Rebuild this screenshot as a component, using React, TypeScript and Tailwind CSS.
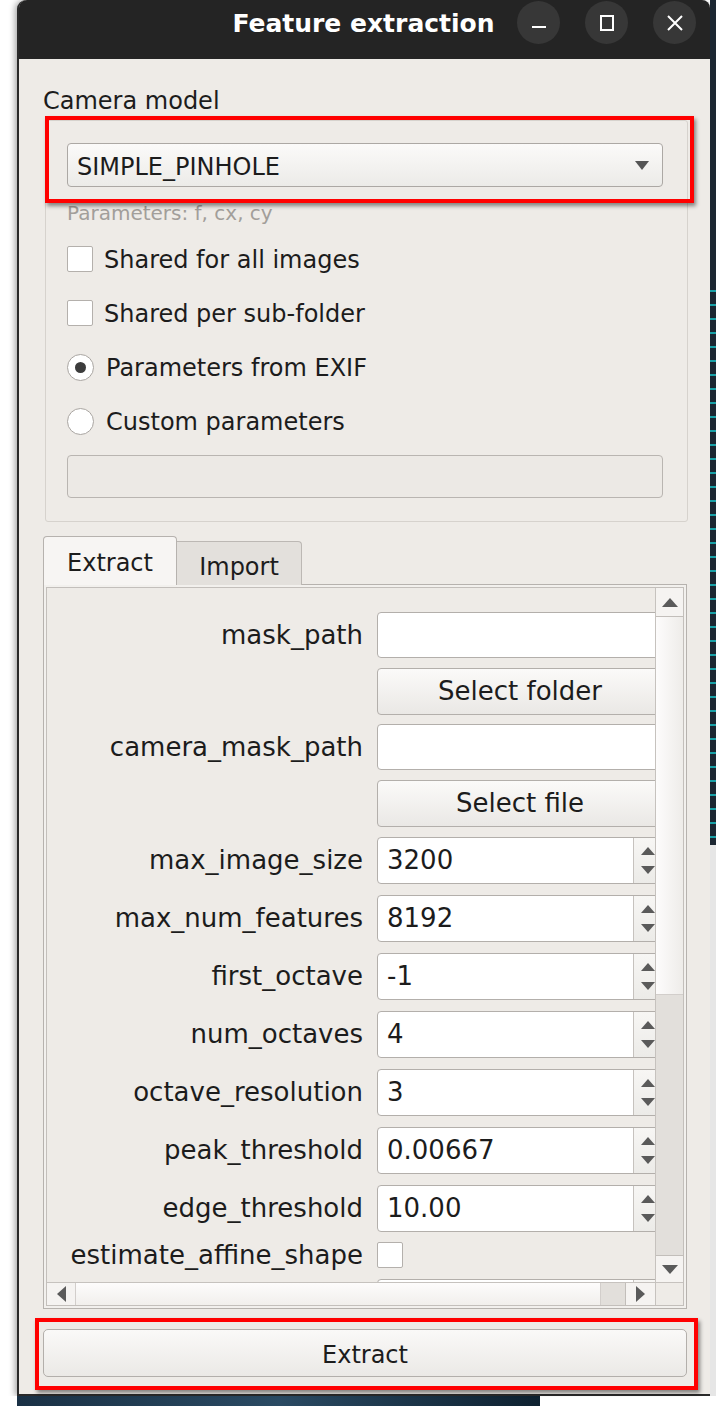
import React from "react";

type Dir = "up" | "down" | "left" | "right";

function Tri({ dir, w = 14, h = 8, color = "#5a5a5a" }: { dir: Dir; w?: number; h?: number; color?: string }) {
  const vertical = dir === "up" || dir === "down";
  const W = vertical ? w : h;
  const H = vertical ? h : w;
  let pts = "";
  if (dir === "up") pts = `0,${H} ${W / 2},0 ${W},${H}`;
  if (dir === "down") pts = `0,0 ${W},0 ${W / 2},${H}`;
  if (dir === "left") pts = `${W},0 ${W},${H} 0,${H / 2}`;
  if (dir === "right") pts = `0,0 ${W},${H / 2} 0,${H}`;
  return (
    <svg width={W} height={H} viewBox={`0 0 ${W} ${H}`} className="block shrink-0">
      <polygon points={pts} fill={color} />
    </svg>
  );
}

function TitleBar() {
  return (
    <div className="relative h-[59px] shrink-0 bg-[#242424] rounded-t-[8px] flex justify-center">
      <div className="h-[48px] leading-[48px] text-white font-bold text-[25px] font-['DejaVu_Sans',sans-serif] pr-[2px]">
        Feature extraction
      </div>
      <div className="absolute right-[14px] top-[1px] flex gap-[25px]">
        <div className="w-[43px] h-[43px] rounded-full bg-[#373737] flex items-center justify-center">
          <svg width="16" height="16" viewBox="0 0 16 16">
            <rect x="1" y="11" width="14" height="2" fill="#fff" />
          </svg>
        </div>
        <div className="w-[43px] h-[43px] rounded-full bg-[#373737] flex items-center justify-center">
          <svg width="16" height="18" viewBox="0 0 16 18">
            <rect x="2" y="2" width="12" height="14" fill="none" stroke="#fff" strokeWidth="2" />
          </svg>
        </div>
        <div className="w-[43px] h-[43px] rounded-full bg-[#373737] flex items-center justify-center">
          <svg width="18" height="18" viewBox="0 0 18 18">
            <path d="M2 2 L16 16 M16 2 L2 16" stroke="#fff" strokeWidth="2" />
          </svg>
        </div>
      </div>
    </div>
  );
}

function CheckRow({ label, first }: { label: string; first?: boolean }) {
  return (
    <div className={`${first ? "mt-[20px]" : "mt-[24px]"} h-[30px] flex items-center`}>
      <div className="w-[26px] h-[26px] bg-white border border-[#b4b0ac] rounded-[2px] shrink-0" />
      <span className="ml-[11px] text-[24px] leading-[30px] pt-[2px]">{label}</span>
    </div>
  );
}

function RadioRow({ label, checked }: { label: string; checked?: boolean }) {
  return (
    <div className="mt-[24px] h-[30px] flex items-center">
      <div className="w-[27px] h-[27px] bg-white border border-[#a9a5a1] rounded-full shrink-0 flex items-center justify-center">
        {checked && <div className="w-[11px] h-[11px] rounded-full bg-[#3c3c3c]" />}
      </div>
      <span className="ml-[12px] text-[24px] leading-[30px] pt-[2px]">{label}</span>
    </div>
  );
}

function Label({ text }: { text: string }) {
  return (
    <div className="w-[330px] shrink-0 pr-[14px] text-right text-[26px] whitespace-nowrap">{text}</div>
  );
}

function InputRow({ label }: { label: string }) {
  return (
    <div className="h-[46px] flex items-center">
      <Label text={label} />
      <div className="w-[286px] h-[46px] shrink-0 bg-white border border-[#b3afab] rounded-[4px]" />
    </div>
  );
}

function ButtonRow({ text }: { text: string }) {
  return (
    <div className="h-[46px] flex items-center">
      <Label text="" />
      <div className="w-[286px] h-[47px] shrink-0 border border-[#b3afab] rounded-[4px] bg-gradient-to-b from-[#fbfaf9] to-[#eae8e5] flex items-center justify-center text-[26px] pt-[1px]">
        {text}
      </div>
    </div>
  );
}

function SpinRow({ label, value }: { label: string; value: string }) {
  return (
    <div className="h-[48px] flex items-center">
      <Label text={label} />
      <div className="w-[286px] h-[47px] shrink-0 bg-white border border-[#b3afab] rounded-[4px] flex overflow-hidden">
        <div className="flex-1 pl-[9px] pt-[1px] flex items-center text-[26px]">{value}</div>
        <div className="w-[29px] border-l border-[#c6c2be] bg-gradient-to-b from-[#f7f6f4] to-[#ecebe8] flex flex-col items-center justify-center gap-[11px] pr-[1px]">
          <Tri dir="up" w={14} h={8} />
          <Tri dir="down" w={14} h={8} />
        </div>
      </div>
    </div>
  );
}

function CheckFieldRow({ label }: { label: string }) {
  return (
    <div className="h-[26px] flex items-center">
      <Label text={label} />
      <div className="w-[26px] h-[26px] bg-white border border-[#b4b0ac] rounded-[2px] shrink-0" />
    </div>
  );
}

function RightStrip() {
  const dashes = Array.from({ length: 40 });
  return (
    <div className="w-[6px] shrink-0 flex flex-col">
      <div className="h-[845px] bg-[#1c2732] flex flex-col gap-[12px] pt-[290px] overflow-hidden">
        {dashes.map((_, i) => (
          <div key={i} className="h-[2px] w-[6px] bg-[#19a0a6] shrink-0" />
        ))}
      </div>
      <div className="flex-1 bg-[#e6e6e6]" />
    </div>
  );
}

export default function App() {
  return (
    <div className="relative w-[716px] h-[1406px] bg-white overflow-hidden font-['DejaVu_Sans',sans-serif] text-[#1c1c1c]">
      <div className="flex h-[1396px]">
        <div className="w-[17px] shrink-0 bg-white" />
        <div className="w-[693px] shrink-0 flex flex-col bg-[#eeebe7] border-l-2 border-b-2 border-[#2a2a2a] rounded-t-[9px] shadow-[-2px_0_6px_rgba(0,0,0,0.35)]">
          <TitleBar />
          <div className="flex flex-col pl-[24px] pr-[23px]">
            <div className="mt-[27px] h-[28px] leading-[28px] text-[24px] pt-[1px]">Camera model</div>

            <div className="mt-[6px] ml-[2px] w-[643px] border border-[#d6d2cd] rounded-[3px] pl-[21px] pr-[24px] pt-[22px] pb-[23px] flex flex-col">
              <div className="h-[44px] border border-[#aca8a4] rounded-[4px] bg-gradient-to-b from-[#fbfaf9] to-[#ecebe8] flex items-center pl-[9px] pr-[13px]">
                <span className="flex-1 text-[24px] pt-[3px]">SIMPLE_PINHOLE</span>
                <Tri dir="down" w={14} h={9} color="#555" />
              </div>
              <div className="mt-[15px] h-[22px] leading-[22px] text-[20px] text-[#a29e9a]">Parameters: f, cx, cy</div>
              <CheckRow label="Shared for all images" first />
              <CheckRow label="Shared per sub-folder" />
              <RadioRow label="Parameters from EXIF" checked />
              <RadioRow label="Custom parameters" />
              <div className="mt-[19px] h-[43px] border border-[#b9b5b1] rounded-[4px] bg-[#ece9e5]" />
            </div>

            <div className="mt-[14px] h-[49px] flex items-end relative z-10">
              <div className="w-[134px] h-[49px] bg-[#f7f5f3] border border-b-0 border-[#b6b2ae] rounded-t-[4px] flex items-center justify-center text-[24px] pt-[4px]">
                Extract
              </div>
              <div className="w-[125px] h-[44px] bg-[#e3e0dc] border border-l-0 border-b-0 border-[#bcb8b4] rounded-tr-[4px] flex items-center justify-center text-[24px] pt-[6px]">
                Import
              </div>
            </div>

            <div className="-mt-[1px] w-[644px] h-[725px] border border-[#b6b2ae] bg-[#f2f0ed] p-[2px] flex">
              <div className="flex-1 border border-[#c3bfbb] flex flex-col bg-[#eeebe7]">
                <div className="flex h-[694px]">
                  <div className="w-[608px] h-[694px] overflow-hidden">
                    <div className="pt-[24px] flex flex-col gap-[10px] w-[616px]">
                      <InputRow label="mask_path" />
                      <ButtonRow text="Select folder" />
                      <InputRow label="camera_mask_path" />
                      <ButtonRow text="Select file" />
                      <SpinRow label="max_image_size" value="3200" />
                      <SpinRow label="max_num_features" value="8192" />
                      <SpinRow label="first_octave" value="-1" />
                      <SpinRow label="num_octaves" value="4" />
                      <SpinRow label="octave_resolution" value="3" />
                      <SpinRow label="peak_threshold" value="0.00667" />
                      <SpinRow label="edge_threshold" value="10.00" />
                      <CheckFieldRow label="estimate_affine_shape" />
                      <SpinRow label="" value="" />
                    </div>
                  </div>
                  <div className="w-[28px] flex flex-col border-l border-[#c6c2be]">
                    <div className="h-[29px] bg-[#f5f3f1] border-b border-[#c2beba] flex items-center justify-center">
                      <Tri dir="up" w={16} h={9} />
                    </div>
                    <div className="h-[377px] bg-gradient-to-r from-[#fdfcfc] to-[#eeece9]" />
                    <div className="flex-1 bg-[#e2dfdb] border-t border-[#d2cecb]" />
                    <div className="h-[27px] bg-[#f5f3f1] border-t border-[#c2beba] flex items-center justify-center">
                      <Tri dir="down" w={16} h={9} />
                    </div>
                  </div>
                </div>
                <div className="flex flex-1 border-t border-[#c6c2be]">
                  <div className="w-[28px] bg-[#f5f3f1] flex items-center justify-center">
                    <Tri dir="left" w={16} h={9} />
                  </div>
                  <div className="w-[525px] bg-gradient-to-b from-[#fdfcfc] to-[#f1efec] border-l border-[#d2cecb]" />
                  <div className="w-[25px] bg-[#e2dfdb] border-l border-[#d2cecb]" />
                  <div className="w-[30px] bg-[#f5f3f1] border-l border-[#c2beba] flex items-center justify-center">
                    <Tri dir="right" w={16} h={9} />
                  </div>
                  <div className="flex-1 bg-[#eeebe7] border-l border-[#c6c2be]" />
                </div>
              </div>
            </div>

            <div className="mt-[20px] h-[48px] border border-[#b3afab] rounded-[5px] bg-gradient-to-b from-[#faf9f8] to-[#ebe9e6] flex items-center justify-center text-[24px] pt-[3px]">
              Extract
            </div>
          </div>
        </div>
        <RightStrip />
      </div>
      <div className="flex h-[10px]">
        <div className="w-[17px] bg-white" />
        <div className="w-[523px] bg-gradient-to-r from-[#1a3145] via-[#2a4a63] to-[#0e2130]" />
        <div className="flex-1 bg-white" />
      </div>

      <div className="absolute left-[45px] top-[116px] w-[649px] h-[87px] border-4 border-[#ff0000] shadow-[2px_3px_4px_rgba(0,0,0,0.45)] pointer-events-none" />
      <div className="absolute left-[35px] top-[1318px] w-[663px] h-[72px] border-4 border-[#ff0000] shadow-[2px_3px_4px_rgba(0,0,0,0.45)] pointer-events-none" />
    </div>
  );
}
